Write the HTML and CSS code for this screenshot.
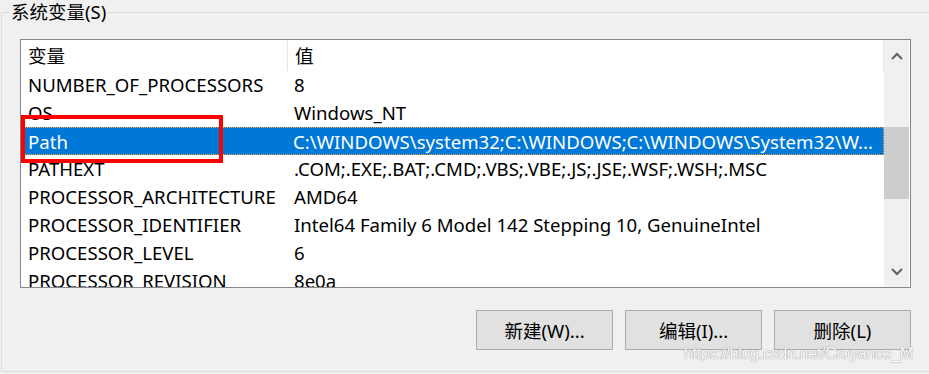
FILE: index.html
```html
<!doctype html>
<html lang="zh-CN">
<head>
  <meta charset="utf-8">
  <title>系统变量</title>
  <link rel="stylesheet" href="styles.css">
</head>
<body>
	<fieldset class="group">
		<legend>系统变量(S)</legend>

		<div class="listbox">
			<div class="table">
				<div class="row head">
					<div class="col name">变量</div>
					<div class="col value">值</div>
				</div>
				<div class="row"><div class="col name">NUMBER_OF_PROCESSORS</div><div class="col value">8</div></div>
				<div class="row"><div class="col name">OS</div><div class="col value">Windows_NT</div></div>
				<div class="row selected"><div class="col name">Path</div><div class="col value">C:\WINDOWS\system32;C:\WINDOWS;C:\WINDOWS\System32\W...</div></div>
				<div class="row"><div class="col name">PATHEXT</div><div class="col value">.COM;.EXE;.BAT;.CMD;.VBS;.VBE;.JS;.JSE;.WSF;.WSH;.MSC</div></div>
				<div class="row"><div class="col name">PROCESSOR_ARCHITECTURE</div><div class="col value">AMD64</div></div>
				<div class="row"><div class="col name">PROCESSOR_IDENTIFIER</div><div class="col value">Intel64 Family 6 Model 142 Stepping 10, GenuineIntel</div></div>
				<div class="row"><div class="col name">PROCESSOR_LEVEL</div><div class="col value">6</div></div>
				<div class="row"><div class="col name">PROCESSOR_REVISION</div><div class="col value">8e0a</div></div>
			</div>
			<div class="scrollbar">
				<div class="arrow">
					<svg width="12" height="8" viewBox="0 0 12 8"><path d="M1 7 L6 2 L11 7" fill="none" stroke="#606060" stroke-width="2"/></svg>
				</div>
				<div class="track"><div class="thumb"></div></div>
				<div class="arrow">
					<svg width="12" height="8" viewBox="0 0 12 8"><path d="M1 1 L6 6 L11 1" fill="none" stroke="#606060" stroke-width="2"/></svg>
				</div>
			</div>
		</div>

		<div class="buttons">
			<button class="btn">新建(W)...</button>
			<button class="btn">编辑(I)...</button>
			<button class="btn">删除(L)</button>
		</div>
	</fieldset>

	<!-- red annotation box over the Path row -->
	<div class="mark"></div>
	<div class="watermark">https://blog.csdn.net/Croyance_M</div>
</body>
</html>
```

FILE: styles.css
```css
html, body {
	margin			: 0;
	padding			: 0;
	background		: #f0f0f0;
	overflow		: hidden;
}

body {
	width			: 929px;
	height			: 374px;
	position		: relative;
	font-family		: "Noto Sans", "Noto Sans CJK SC", sans-serif;
	font-size		: 18.6px;
	color			: #000;
}

.group {
	margin			: 0 -20px 0 1px;
	padding			: 0;
	border			: 1px solid #dcdcdc;
	height			: 372px;
	box-sizing		: border-box;
}

.group legend {
	margin-left		: 7px;
	padding			: 0 2px;
	font-size		: 18.5px;
	line-height		: 24px;
	color			: #000;
}

.listbox {
	margin			: 15px 0 0 18px;
	width			: 889px;
	height			: 247px;
	border			: 1px solid #828790;
	background		: #fff;
	display			: flex;
	overflow		: hidden;
}

.table {
	width			: 863px;
	overflow		: hidden;
}

.row {
	display			: flex;
	height			: 28px;
	line-height		: 28px;
	white-space		: nowrap;
	box-sizing		: border-box;
}

.row.head {
	height			: 31px;
	line-height		: 31px;
	border-right	: 1px solid #e5e5e5;
}

.col {
	padding-left	: 7px;
	overflow		: hidden;
}

.col.name {
	width			: 259px;
}

.row.head .col.name {
	border-right	: 1px solid #e5e5e5;
}

.col.value {
	flex			: 1;
	padding-left	: 7px;
}

.row.selected {
	background		: #0078d7;
	color			: #fff;
	border			: 1px dotted #f5a33b;
	margin-left		: 1px;
}

.row.selected .col.name {
	width			: 257px;
	padding-left	: 5px;
}

.row.selected .col.value {
	padding-left	: 8px;
}

.scrollbar {
	width			: 25px;
	background		: #f0f0f0;
	display			: flex;
	flex-direction	: column;
}

.arrow {
	height			: 31px;
	display			: flex;
	align-items		: center;
	justify-content	: center;
}

.track {
	flex			: 1;
	padding-top		: 56px;
}

.thumb {
	height			: 72px;
	background		: #cdcdcd;
}

.buttons {
	display			: flex;
	gap				: 12px;
	width			: 891px;
	margin			: 22px 0 0 18px;
	justify-content	: flex-end;
}

.btn {
	width			: 137px;
	height			: 40px;
	margin			: 0;
	padding			: 0;
	background		: #e1e1e1;
	border			: 1px solid #adadad;
	font-family		: "Noto Sans", "Noto Sans CJK SC", sans-serif;
	font-size		: 18.5px;
	color			: #000;
}

.mark {
	position		: absolute;
	left			: 21px;
	top				: 115px;
	width			: 194px;
	height			: 40px;
	border			: 4px solid #f00;
}

.watermark {
	position		: absolute;
	left			: 684px;
	top				: 345px;
	font-family		: "Liberation Sans", Arial, sans-serif;
	font-size		: 16px;
	letter-spacing	: -0.3px;
	color			: #fafafa;
	text-shadow		: 0 0 1px #9a9a9a, 0 0 1px #9a9a9a;
}
```
